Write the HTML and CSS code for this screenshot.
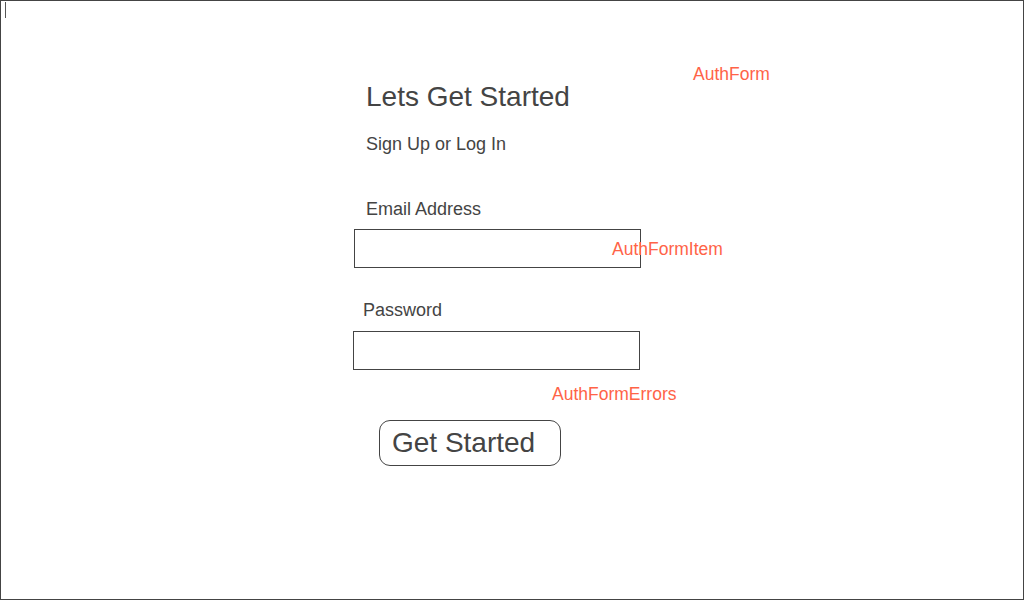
FILE: index.html
```html
<!DOCTYPE html>
<html lang="en">
<head>
<meta charset="utf-8">
<title>Auth Form Wireframe</title>
<link rel="stylesheet" href="styles.css">
</head>
<body>
<div class="frame">
  <span class="caret"></span>
  <form class="auth-form">
    <h1 class="title">Lets Get Started</h1>
    <p class="subtitle">Sign Up or Log In</p>
    <label class="label label-email" for="email">Email Address</label>
    <input class="field field-email" id="email" type="email">
    <label class="label label-password" for="password">Password</label>
    <input class="field field-password" id="password" type="password">
    <button class="submit" type="button">Get Started</button>
  </form>
  <span class="note note-form">AuthForm</span>
  <span class="note note-item">AuthFormItem</span>
  <span class="note note-errors">AuthFormErrors</span>
</div>
</body>
</html>
```

FILE: styles.css
```css
html, body {
  margin: 0;
  padding: 0;
  background: #ffffff;
}

.frame {
  position: relative;
  box-sizing: border-box;
  width: 1024px;
  height: 600px;
  border: 1px solid #444444;
  background: #ffffff;
  font-family: "Liberation Sans", Arial, sans-serif;
  color: #444444;
  overflow: hidden;
}

.caret {
  position: absolute;
  left: 4px;
  top: 1px;
  width: 1px;
  height: 16px;
  background: #555555;
}

.auth-form {
  display: flex;
  flex-direction: column;
  align-items: flex-start;
  margin: 0;
  padding: 80px 0 0 364px;
}

.title {
  margin: 0 0 0 1px;
  font-size: 28px;
  line-height: 32px;
  font-weight: normal;
  color: #444444;
}

.subtitle {
  margin: 20px 0 0 1px;
  font-size: 18px;
  line-height: 22px;
}

.label {
  display: block;
  font-size: 18px;
  line-height: 22px;
}

.label-email {
  margin: 43px 0 0 1px;
}

.label-password {
  margin: 31px 0 0 -2px;
}

.field {
  box-sizing: border-box;
  width: 287px;
  height: 39px;
  margin: 9px 0 0 0;
  padding: 0 8px;
  border: 1px solid #444444;
  border-radius: 0;
  background: #ffffff;
  font-family: inherit;
  font-size: 16px;
  outline: none;
}

.field-email {
  margin-left: -11px;
}

.field-password {
  margin-left: -12px;
  margin-top: 10px;
}

.submit {
  box-sizing: border-box;
  width: 182px;
  height: 46px;
  margin: 50px 0 0 14px;
  padding: 6px 0 6px 12px;
  border: 1px solid #444444;
  border-radius: 11px;
  background: #ffffff;
  color: #444444;
  font-family: inherit;
  font-size: 28px;
  line-height: 32px;
  text-align: left;
  cursor: pointer;
}

.note {
  position: absolute;
  font-size: 17.5px;
  line-height: 22px;
  color: #ff6347;
  white-space: nowrap;
}

.note-form {
  left: 692px;
  top: 62px;
}

.note-item {
  left: 611px;
  top: 237px;
}

.note-errors {
  left: 551px;
  top: 382px;
}
```
